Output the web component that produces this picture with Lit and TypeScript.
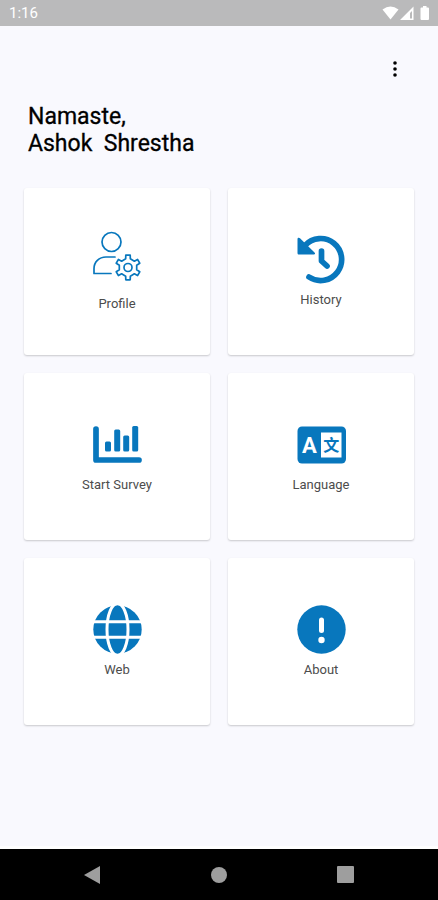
import { LitElement, html, css, svg } from "lit";
import { customElement } from "lit/decorators.js";
import { classMap } from "lit/directives/class-map.js";

/** Closed outline of a cog with evenly spaced teeth. */
function cogPath(cx: number, cy: number, outer: number, inner: number, teeth: number): string {
  const step = (Math.PI * 2) / teeth;
  const parts: string[] = [];
  const at = (r: number, a: number) =>
    `${(cx + r * Math.sin(a)).toFixed(2)} ${(cy - r * Math.cos(a)).toFixed(2)}`;
  for (let i = 0; i < teeth; i++) {
    const a = i * step;
    parts.push(at(inner, a - step * 0.25), at(outer, a - step * 0.17));
    parts.push(at(outer, a + step * 0.17), at(inner, a + step * 0.25));
  }
  return `M${parts.join("L")}Z`;
}

const icons = {
  profile: svg`
    <g class="line">
      <circle cx="18.5" cy="10" r="9.5" />
      <path d="M22 25H13C6 25 1 30 1 36.500V41.500H18" />
      <path d=${cogPath(35, 35.5, 12.5, 9, 6)} />
      <circle cx="35" cy="35.5" r="4" />
    </g>`,
  history: svg`
    <path class="thick" d="M8 9.500A21 21 0 1 1 12 41" />
    <path class="fill" d="M.5 3C.5 1.500 2 1.300 3 2.200L17.500 16.500C18.600 17.700 18 18.500 16.800 18.500H2C1 18.500 .5 18 .5 17Z" />
    <path class="thick" d="M24.500 15V25L30 30" />`,
  survey: svg`
    <path class="thick" d="M3 8V39H46" />
    <g class="fill">
      <rect x="12" y="20.500" width="6" height="10" rx="1.500" />
      <rect x="21.200" y="8.500" width="6" height="22" rx="1.500" />
      <rect x="30.200" y="14.500" width="6" height="16" rx="1.500" />
      <rect x="39.200" y="5" width="6" height="25.500" rx="1.500" />
    </g>`,
  language: svg`
    <rect class="fill" x=".5" y="5.500" width="48.500" height="37" rx="4.500" />
    <rect class="paper" x="24" y="11.500" width="20.500" height="25" />
    <text class="latin" x="12.500" y="32">A</text>
    <text class="han" x="34.200" y="30">文</text>`,
  web: svg`
    <circle class="fill" cx="24.500" cy="23.500" r="24.200" />
    <g class="cut">
      <ellipse cx="24.500" cy="23.500" rx="10.500" ry="26" />
      <path d="M-1 15.700H50M-1 31.300H50" />
    </g>`,
  about: svg`
    <circle class="fill" cx="24.500" cy="23.500" r="24.200" />
    <rect class="paper" x="22" y="11.500" width="5" height="15.500" rx="2.500" />
    <circle class="paper" cx="24.500" cy="34" r="3.200" />`,
};

type IconName = keyof typeof icons;

const tiles: { icon: IconName; label: string; roomy?: boolean }[] = [
  { icon: "profile", label: "Profile", roomy: true },
  { icon: "history", label: "History" },
  { icon: "survey", label: "Start Survey" },
  { icon: "language", label: "Language" },
  { icon: "web", label: "Web" },
  { icon: "about", label: "About" },
];

@customElement("app-root")
export class AppRoot extends LitElement {
  static styles = css`
    :host {
      display: flex;
      flex-direction: column;
      min-height: 100vh;
      box-sizing: border-box;
      background: #f9f9fe;
      color: #000;
      font-family: Roboto, "Liberation Sans", sans-serif;
    }
    button {
      border: 0;
      margin: 0;
      padding: 0;
      background: none;
      color: inherit;
      font: inherit;
      cursor: pointer;
    }
    svg {
      display: block;
      overflow: visible;
    }
    .status {
      display: flex;
      align-items: center;
      justify-content: space-between;
      height: 26px;
      padding: 0 8px 0 9px;
      background: #bababb;
      color: #fff;
      font-size: 15px;
      line-height: 28px;
    }
    .status-icons {
      fill: #fff;
    }
    main {
      flex: 1;
      padding: 27px 24px 24px;
      border-bottom: 3px solid #fff;
    }
    .toolbar {
      display: flex;
      justify-content: flex-end;
      padding: 0 3px;
    }
    .more {
      display: grid;
      place-items: center;
      width: 32px;
      height: 32px;
    }
    h1 {
      margin: 18px 4px 31px;
      font-size: 23px;
      line-height: 27px;
      font-weight: 400;
      -webkit-text-stroke: 0.3px #000;
    }
    .name {
      display: block;
      white-space: pre;
    }
    .tiles {
      display: grid;
      grid-template-columns: 1fr 1fr;
      gap: 18px;
    }
    .tile {
      display: flex;
      flex-direction: column;
      align-items: center;
      justify-content: center;
      gap: 8px;
      min-height: 167px;
      border-radius: 3px;
      background: #fff;
      box-shadow: 0 1px 2px rgba(0, 0, 0, 0.2);
      color: #4c4c4c;
      font-size: 13px;
      line-height: 16px;
    }
    .roomy {
      gap: 16px;
    }
    .fill {
      fill: #0877bd;
    }
    .paper {
      fill: #fff;
    }
    .line {
      fill: none;
      stroke: #0877bd;
      stroke-width: 1.7;
      stroke-linejoin: round;
      stroke-linecap: round;
    }
    .thick {
      fill: none;
      stroke: #0877bd;
      stroke-width: 5.7;
      stroke-linejoin: round;
      stroke-linecap: round;
    }
    .cut {
      fill: none;
      stroke: #fff;
      stroke-width: 3;
    }
    .latin {
      fill: #fff;
      font: 700 22px Roboto, sans-serif;
      text-anchor: middle;
    }
    .han {
      fill: #0877bd;
      font: 700 16px "Noto Sans CJK SC", sans-serif;
      text-anchor: middle;
    }
    .nav {
      display: flex;
      justify-content: space-between;
      padding: 0 79px 0 78px;
      background: #000;
    }
    .nav button {
      display: grid;
      place-items: center;
      width: 28px;
      height: 51px;
    }
    .nav svg {
      fill: #9e9e9e;
    }
  `;

  render() {
    return html`
      <header class="status">
        <time>1:16</time>
        <svg class="status-icons" width="48" height="16" viewBox="0 0 48 16" aria-hidden="true">
          <path d="M.5 4.500Q8.500-1.500 16.500 4.500L8.500 14.500Z" />
          <path fill-rule="evenodd" d="M18 15L31.500 1.500V15ZM28 8V13.500H30V6Z" />
          <path d="M41 1H44.500V2.500H46Q47 2.500 47 3.500V14Q47 15 46 15H39.500Q38.500 15 38.500 14V3.500Q38.500 2.500 39.500 2.500H41Z" />
        </svg>
      </header>
      <main>
        <div class="toolbar">
          <button class="more" aria-label="More options">
            <svg width="6" height="18" viewBox="0 0 6 18" aria-hidden="true">
              <circle cx="3" cy="3" r="1.800" />
              <circle cx="3" cy="9" r="1.800" />
              <circle cx="3" cy="15" r="1.800" />
            </svg>
          </button>
        </div>
        <h1>Namaste,<span class="name">Ashok  Shrestha</span></h1>
        <div class="tiles">
          ${tiles.map(
            (t) => html`
              <button class=${classMap({ tile: true, roomy: !!t.roomy })}>
                <svg width="49" height="48" viewBox="0 0 49 48" aria-hidden="true">
                  ${icons[t.icon]}
                </svg>
                <span>${t.label}</span>
              </button>
            `
          )}
        </div>
      </main>
      <nav class="nav" aria-label="System">
        <button aria-label="Back">
          <svg width="16" height="18" viewBox="0 0 16 18"><path d="M0 9L16 0V18Z" /></svg>
        </button>
        <button aria-label="Home">
          <svg width="16" height="16" viewBox="0 0 16 16"><circle cx="8" cy="8" r="8" /></svg>
        </button>
        <button aria-label="Recent apps">
          <svg width="17" height="17" viewBox="0 0 17 17"><rect width="17" height="17" rx="1" /></svg>
        </button>
      </nav>
    `;
  }
}
